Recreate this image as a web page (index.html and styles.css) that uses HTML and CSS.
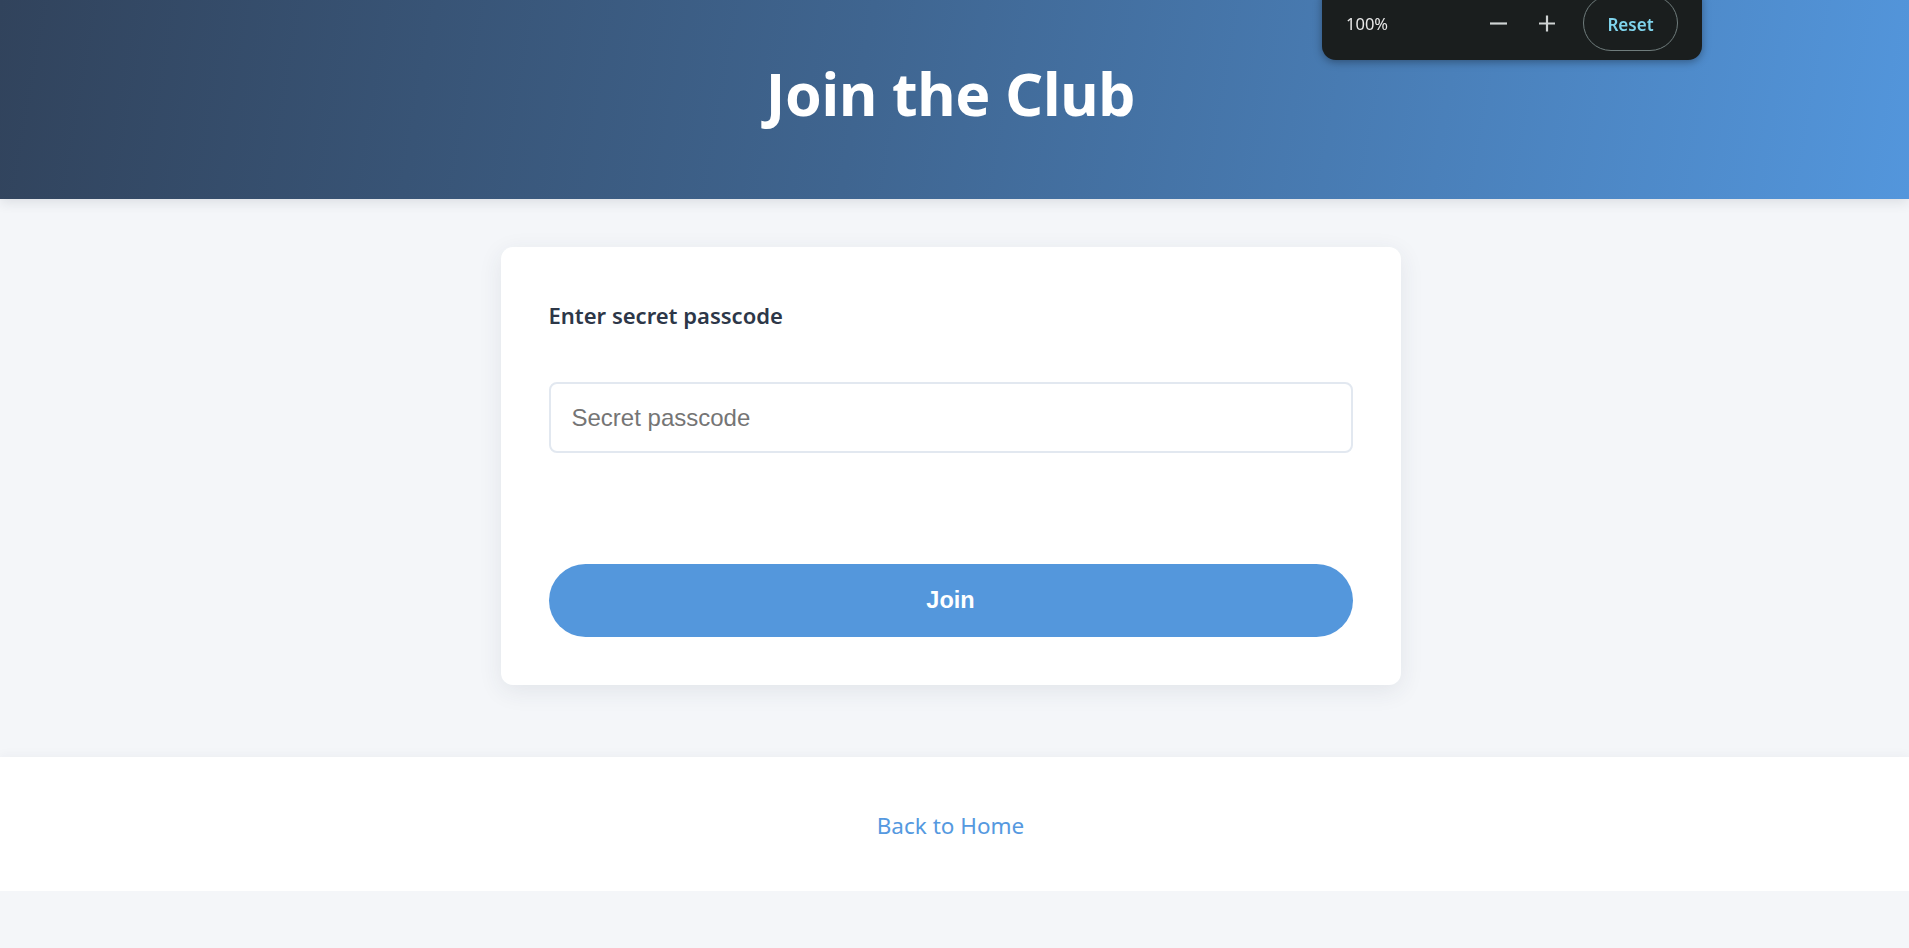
FILE: index.html
```html
<!DOCTYPE html>
<html lang="en">
<head>
<meta charset="utf-8">
<title>Join the Club</title>
<link rel="stylesheet" href="styles.css">
</head>
<body>
<header class="hero">
  <h1 class="hero-title">Join the Club</h1>
</header>
<main class="main">
  <form class="card">
    <label class="field-label" for="pass">Enter secret passcode</label>
    <input id="pass" class="field-input" type="password" placeholder="Secret passcode">
    <div class="message"></div>
    <button class="join-btn" type="button">Join</button>
  </form>
</main>
<footer class="footer">
  <a class="home-link" href="#">Back to Home</a>
</footer>
<div class="zoom-pop">
  <span class="zoom-level">100%</span>
  <span class="zoom-icon zoom-minus"><svg width="19" height="18" viewBox="0 0 19 18"><path d="M1 9.5H18" stroke="#cfd3d3" stroke-width="2.2" fill="none"/></svg></span>
  <span class="zoom-icon zoom-plus"><svg width="18" height="18" viewBox="0 0 18 18"><path d="M1 9.5H17M9 1.5V17.5" stroke="#cfd3d3" stroke-width="2.2" fill="none"/></svg></span>
  <span class="zoom-reset">Reset</span>
</div>
</body>
</html>
```

FILE: styles.css
```css
html, body {
  margin: 0;
  padding: 0;
}
body {
  background: #f4f6f9;
  font-family: "Noto Sans", "Open Sans", sans-serif;
  color: #2d3748;
}
.hero {
  height: 199px;
  box-sizing: border-box;
  padding: 56px 8px 0 0;
  background: linear-gradient(100deg, #31435c 0%, #3f6590 45%, #5396dc 100%);
  box-shadow: 0 3px 12px rgba(30, 40, 60, 0.12);
  text-align: center;
  position: relative;
  z-index: 1;
}
.hero-title {
  margin: 0;
  font-size: 59px;
  line-height: 74px;
  font-weight: 700;
  color: #ffffff;
  letter-spacing: -0.3px;
}
.main {
  padding: 48px 8px 72px 0;
  display: flex;
  justify-content: center;
}
.card {
  width: 900px;
  box-sizing: border-box;
  padding: 48px;
  background: #ffffff;
  border-radius: 12px;
  box-shadow: 0 6px 24px rgba(40, 50, 80, 0.09);
  display: flex;
  flex-direction: column;
}
.field-label {
  display: block;
  font-size: 22px;
  line-height: 36px;
  font-weight: 600;
  color: #2d3748;
  margin-top: 2px;
  margin-bottom: 49px;
}
.field-input {
  height: 71px;
  box-sizing: border-box;
  width: 100%;
  border: 2px solid #e2e8f0;
  border-radius: 8px;
  padding: 0 20px 0 21px;
  font-family: "Liberation Sans", Arial, sans-serif;
  font-size: 24px;
  color: #333;
  background: #fff;
  outline: none;
}
.field-input::placeholder {
  color: #757575;
}
.message {
  height: 111px;
}
.join-btn {
  height: 73px;
  border: none;
  border-radius: 999px;
  background: #5497dc;
  color: #ffffff;
  font-family: "Liberation Sans", Arial, sans-serif;
  font-size: 23.5px;
  font-weight: 700;
  cursor: pointer;
}
.footer {
  height: 134px;
  background: #ffffff;
  box-shadow: 0 -2px 10px rgba(40, 50, 80, 0.04);
  display: flex;
  align-items: center;
  justify-content: center;
  padding-right: 8px;
}
.home-link {
  font-size: 22.5px;
  color: #5599e0;
  text-decoration: none;
  margin-top: 2px;
}
.zoom-pop {
  position: fixed;
  top: -14px;
  left: 1322px;
  width: 380px;
  height: 74px;
  box-sizing: border-box;
  padding: 0 24px;
  background: #1a1e1e;
  border-radius: 14px;
  box-shadow: 0 2px 8px rgba(0, 0, 0, 0.35);
  display: flex;
  align-items: center;
  z-index: 10;
}
.zoom-level {
  width: 143px;
  font-size: 16.5px;
  color: #e8e8e8;
  margin-top: 1px;
}
.zoom-icon {
  display: flex;
}
.zoom-minus {
  margin-right: 30px;
}
.zoom-plus {
  margin-right: 27px;
}
.zoom-reset {
  width: 95px;
  height: 56px;
  box-sizing: border-box;
  border: 1px solid #6f7c7c;
  border-radius: 28px;
  display: flex;
  align-items: center;
  justify-content: center;
  font-size: 17px;
  font-weight: 600;
  color: #7fd4ec;
  padding-top: 2px;
}
```
